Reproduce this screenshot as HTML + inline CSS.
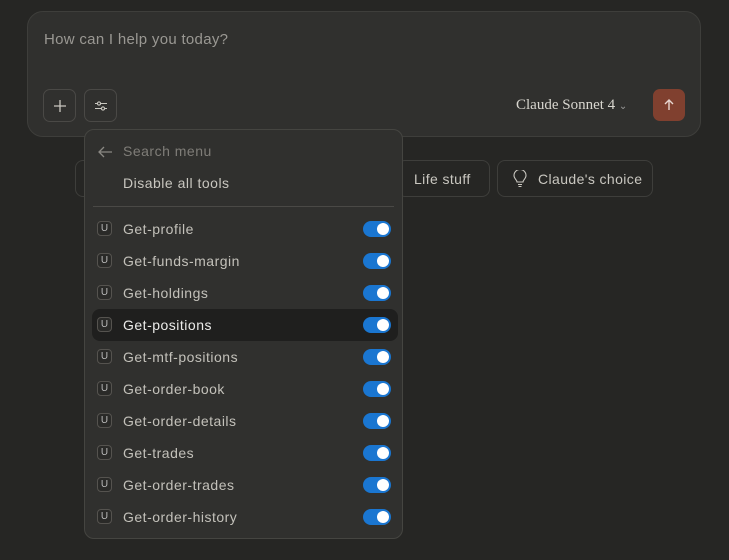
<!DOCTYPE html>
<html><head><style>
body{margin:0;width:729px;height:560px;background:#262624;font-family:"Liberation Sans",sans-serif;position:relative;overflow:hidden}
.box{position:absolute;left:27px;top:11px;width:672px;height:124px;background:#30302e;border:1px solid #3e3e3b;border-radius:16px}
.ph{position:absolute;left:16px;top:19px;color:#9a9893;font-size:15px;letter-spacing:0.3px}
.btn{position:absolute;top:77px;width:31px;height:31px;border:1px solid #4a4946;border-radius:7px;display:flex;align-items:center;justify-content:center}
.model{position:absolute;left:488px;top:85px;font-family:"Liberation Serif",serif;font-size:15px;color:#d8d6cf}
.send{position:absolute;left:625px;top:77px;width:32px;height:32px;background:#80402f;border-radius:7px;display:flex;align-items:center;justify-content:center}
.chip{position:absolute;top:160px;height:37px;border:1px solid #3e3e3b;border-radius:8px;color:#c9c7c0;font-size:14px;letter-spacing:0.4px;display:flex;align-items:center;box-sizing:border-box}
.menu{position:absolute;left:84px;top:129px;width:319px;height:410px;background:#30302e;border:1px solid #454541;border-radius:10px;box-sizing:border-box}
.row{position:absolute;left:7px;width:306px;height:32px}
.row .u{position:absolute;left:5px;top:8px;width:15px;height:15px;box-sizing:border-box;border:1px solid #55534f;border-radius:4px;font-size:10px;color:#bbb;display:flex;align-items:center;justify-content:center;background:#2a2a28}
.row .t{position:absolute;left:31px;top:8px;font-size:14px;color:#c3c1ba;letter-spacing:0.5px}
.row .tg{position:absolute;left:271px;top:8px;width:28px;height:16px;border-radius:8px;background:#1a76d1}
.row .tg:after{content:"";position:absolute;right:2px;top:2px;width:12px;height:12px;border-radius:50%;background:#fff}
.hl{background:#1f1f1e;border-radius:8px}
.hl .t{color:#ececea}
</style></head><body>
<div class="box">
<div class="ph">How can I help you today?</div>
<div class="btn" style="left:15px"><svg width="14" height="14"><path d="M7 1v12M1 7h12" stroke="#c9c7c0" stroke-width="1.3"/></svg></div>
<div class="btn" style="left:56px"><svg width="14" height="14" fill="none" stroke="#c9c7c0" stroke-width="1.1"><path d="M1 4.5h12M1 9.5h12"/><circle cx="5" cy="4.5" r="1.6" fill="#30302e"/><circle cx="9" cy="9.5" r="1.6" fill="#30302e"/></svg></div>
<div class="model">Claude Sonnet 4 <span style="font-size:10px;color:#999">&#8964;</span></div>
<div class="send"><svg width="14" height="14" fill="none" stroke="#e8d6d0" stroke-width="1.4"><path d="M7 12V2M3 6l4-4 4 4"/></svg></div>
</div>
<div class="chip" style="left:75px;width:20px"></div>
<div class="chip" style="left:397px;width:93px;padding-left:16px">Life stuff</div>
<div class="chip" style="left:497px;width:156px;padding-left:14px"><svg width="16" height="18" fill="none" stroke="#c9c7c0" stroke-width="1.1" style="margin-right:10px"><path d="M5 12c0-2-3-3.5-3-6.5a6 6 0 0 1 12 0c0 3-3 4.5-3 6.5zM6 14.5h4M6.5 16.5h3"/></svg>Claude's choice</div>
<div class="menu">
<svg style="position:absolute;left:12px;top:15px" width="16" height="14" fill="none" stroke="#8a8883" stroke-width="1.3"><path d="M15 7H2M7 2L2 7l5 5"/></svg>
<div style="position:absolute;left:38px;top:13px;font-size:14px;color:#7f7d78;letter-spacing:0.5px">Search menu</div>
<div style="position:absolute;left:38px;top:45px;font-size:14px;color:#c9c7c0;letter-spacing:0.5px">Disable all tools</div>
<div style="position:absolute;left:8px;right:8px;top:76px;height:1px;background:#4a4946"></div>
<div class="row" style="top:83px"><div class="u">U</div><div class="t">Get-profile</div><div class="tg"></div></div>
<div class="row" style="top:115px"><div class="u">U</div><div class="t">Get-funds-margin</div><div class="tg"></div></div>
<div class="row" style="top:147px"><div class="u">U</div><div class="t">Get-holdings</div><div class="tg"></div></div>
<div class="row hl" style="top:179px"><div class="u">U</div><div class="t">Get-positions</div><div class="tg"></div></div>
<div class="row" style="top:211px"><div class="u">U</div><div class="t">Get-mtf-positions</div><div class="tg"></div></div>
<div class="row" style="top:243px"><div class="u">U</div><div class="t">Get-order-book</div><div class="tg"></div></div>
<div class="row" style="top:275px"><div class="u">U</div><div class="t">Get-order-details</div><div class="tg"></div></div>
<div class="row" style="top:307px"><div class="u">U</div><div class="t">Get-trades</div><div class="tg"></div></div>
<div class="row" style="top:339px"><div class="u">U</div><div class="t">Get-order-trades</div><div class="tg"></div></div>
<div class="row" style="top:371px"><div class="u">U</div><div class="t">Get-order-history</div><div class="tg"></div></div>
</div>
</body></html>
